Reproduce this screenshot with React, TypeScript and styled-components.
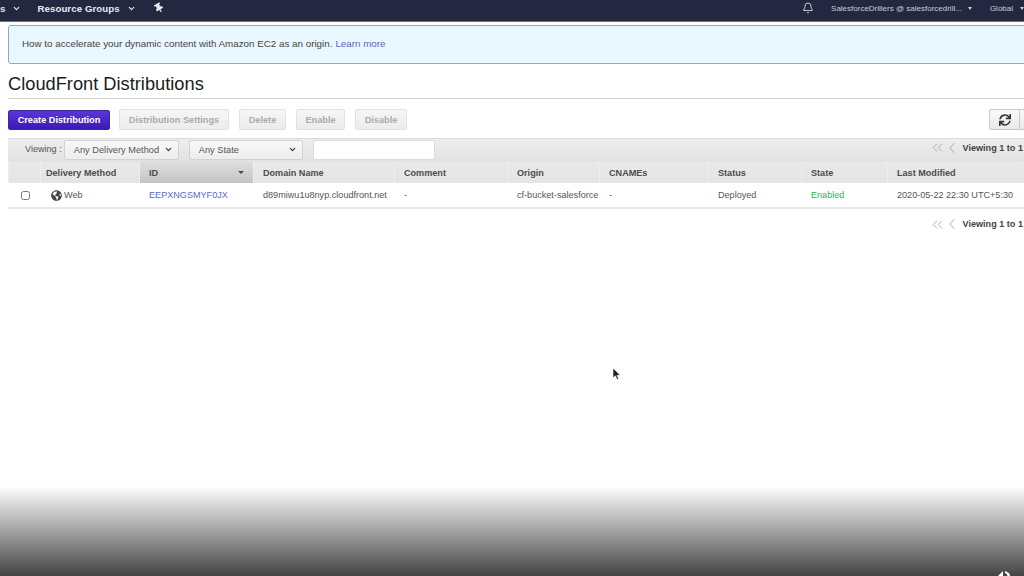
import styled, { createGlobalStyle } from "styled-components";
import { ChevronDown, ChevronLeft, ChevronsLeft, Bell } from "lucide-react";
import { FaSync, FaGlobeAmericas, FaThumbtack } from "react-icons/fa";

const GlobalStyle = createGlobalStyle`
  html, body { margin: 0; padding: 0; background: #fff; }
  body { font-family: "Liberation Sans", Arial, sans-serif; color: #444; }
`;

const Screen = styled.div`
  position: relative;
  width: 1024px;
  height: 576px;
  overflow: hidden;
  background: #fff;
`;

const Nav = styled.div`
  display: flex;
  align-items: center;
  box-sizing: border-box;
  height: 22px;
  padding-bottom: 5px;
  width: 1024px;
  background: #232840;
  border-bottom: 1px solid #6f7280;
  color: #e8e9ee;
`;

const NavLeft = styled.div`
  display: flex;
  align-items: center;
  font-size: 9.65px;
  font-weight: 700;
  letter-spacing: 0.1px;
`;

const NavItem = styled.span<{ $gap?: number; $before?: number }>`
  display: inline-flex;
  align-items: center;
  margin-left: ${(p) => p.$before ?? 0}px;
  margin-right: ${(p) => p.$gap ?? 0}px;
  svg { margin-left: 7px; }
`;

const NavRight = styled.div`
  display: flex;
  align-items: center;
  margin-left: auto;
  font-size: 8px;
  color: #c9ccd6;
`;

const Caret = styled.span<{ $size?: number; $offset?: number }>`
  display: inline-block;
  width: 0;
  height: 0;
  margin-left: ${(p) => p.$offset ?? 6}px;
  border-left: ${(p) => p.$size ?? 2.5}px solid transparent;
  border-right: ${(p) => p.$size ?? 2.5}px solid transparent;
  border-top: ${(p) => p.$size ?? 3}px solid currentColor;
`;

const Content = styled.div`
  width: 1060px;
  padding: 3px 0 0 8px;
`;

const Banner = styled.div`
  display: flex;
  align-items: center;
  box-sizing: border-box;
  height: 39px;
  padding: 0 0 2px 13px;
  background: #e9f7fe;
  border: 1px solid #9aa3cf;
  border-radius: 3px;
  font-size: 9.8px;
  color: #444;
`;

const TextLink = styled.a`
  color: #5a68c4;
  margin-left: 3px;
`;

const Title = styled.h1`
  margin: 8px 0 0;
  padding-bottom: 2px;
  height: 24px;
  line-height: 24px;
  font-size: 18.25px;
  font-weight: 400;
  color: #1c1c1c;
  border-bottom: 1px solid #d4d4d4;
`;

const Toolbar = styled.div`
  display: flex;
  align-items: center;
  margin-top: 10px;
  height: 21px;
`;

const Primary = styled.button`
  height: 20px;
  width: 102px;
  padding: 0;
  margin-right: 9px;
  background: linear-gradient(#5a36d8, #3d18b8);
  border: 1px solid #3a2aa0;
  border-radius: 2px;
  color: #fff;
  font: 700 9.2px "Liberation Sans", sans-serif;
`;

const Disabled = styled.button<{ $width: number }>`
  height: 21px;
  width: ${(p) => p.$width}px;
  padding: 0;
  margin-right: 10px;
  background: linear-gradient(#f6f6f6, #ececec);
  border: 1px solid #e2e2e2;
  border-radius: 2px;
  color: #ababab;
  font: 700 9.2px "Liberation Sans", sans-serif;
`;

const RefreshGroup = styled.div`
  display: flex;
  margin-left: auto;
  margin-right: 17px;
`;

const IconButton = styled.button`
  display: flex;
  align-items: center;
  justify-content: center;
  width: 31px;
  height: 21px;
  padding: 0;
  background: linear-gradient(#fafafa, #e8e8e8);
  border: 1px solid #c8c8c8;
  border-radius: 2px 0 0 2px;
  color: #333;
`;

const GroupEnd = styled(IconButton)`
  border-left: none;
  border-radius: 0;
`;

const FilterBar = styled.div`
  display: flex;
  align-items: center;
  margin-top: 8px;
  padding-bottom: 2px;
  height: 24px;
  background: linear-gradient(#ededed, #e2e2e2);
  border-top: 1px solid #dcdcdc;
  box-sizing: border-box;
  font-size: 9.1px;
`;

const ViewingLabel = styled.span`
  margin-left: 17px;
  margin-right: 2px;
  margin-top: -1px;
  color: #555;
`;

const Select = styled.div<{ $width: number }>`
  display: flex;
  align-items: center;
  justify-content: space-between;
  box-sizing: border-box;
  width: ${(p) => p.$width}px;
  height: 20px;
  margin-right: 10px;
  padding: 0 5px 0 9px;
  background: linear-gradient(#f8f8f8, #ededed);
  border: 1px solid #d2d2d2;
  border-radius: 2px;
  color: #555;
  font-size: 9.25px;
  white-space: nowrap;
  svg { color: #333; flex: none; }
`;

const SearchBox = styled.div`
  width: 122px;
  height: 20px;
  box-sizing: border-box;
  background: #fff;
  border: 1px solid #dcdcdc;
  border-radius: 2px;
`;

const Pager = styled.div<{ $lift?: number }>`
  display: flex;
  align-items: center;
  margin-left: auto;
  margin-right: 45px;
  margin-top: ${(p) => p.$lift ?? 0}px;
  font-size: 9.1px;
  font-weight: 700;
  color: #444;
  white-space: nowrap;
  svg { color: #a8a8a8; flex: none; }
  svg + svg { margin-left: -3px; }
  span { margin-left: 2px; }
`;

const columns = "32px 99px 114px 141px 113px 92px 109px 93px 86px 174px";

const HeadRow = styled.div`
  display: grid;
  grid-template-columns: ${columns};
  height: 21px;
  background: linear-gradient(#e9e9e9, #e4e4e4);
`;

const HeadCell = styled.div<{ $sorted?: boolean; $inset?: number }>`
  display: flex;
  align-items: center;
  justify-content: space-between;
  padding: 0 9px 0 ${(p) => p.$inset ?? 9}px;
  font-size: 9.1px;
  font-weight: 700;
  color: #4c4c4c;
  white-space: nowrap;
  border-left: 1px solid #eeeeee;
  background: ${(p) => (p.$sorted ? "linear-gradient(#dedede, #c4c4c4)" : "none")};
`;

const DataRow = styled.div`
  display: grid;
  grid-template-columns: ${columns};
  height: 24px;
  align-items: center;
  background: #fff;
  border-bottom: 2px solid #e8e8e8;
  font-size: 9.1px;
  color: #555;
`;

const DataCell = styled.div<{ $tone?: string }>`
  padding-left: 10px;
  white-space: nowrap;
  color: ${(p) => p.$tone ?? "#555"};
  display: flex;
  align-items: center;
  gap: 2px;
  svg { color: #444; margin-left: 1px; }
`;

const Check = styled.input.attrs({ type: "checkbox" })`
  display: block;
  width: 9px;
  height: 9px;
  margin: 0 0 0 13px;
`;

const FooterPager = styled.div`
  display: flex;
  justify-content: flex-end;
  margin-top: 8px;
  height: 14px;
`;

const PinIcon = styled(FaThumbtack)`
  margin-left: 0;
  transform: rotate(-30deg);
`;

const BottomFade = styled.div`
  position: absolute;
  left: 0;
  right: 0;
  bottom: 0;
  height: 90px;
  background: linear-gradient(rgba(68, 68, 68, 0), #444);
  pointer-events: none;
`;

const Cursor = styled.svg`
  position: absolute;
  left: 612px;
  top: 367px;
`;

const SpeakerGlyph = styled.svg`
  position: absolute;
  right: 14px;
  bottom: 0;
`;

const PagerBlock = ({ lift }: { lift?: number }) => (
  <Pager $lift={lift}>
    <ChevronsLeft size={17} strokeWidth={1.3} />
    <ChevronLeft size={18} strokeWidth={1.3} />
    <span>Viewing 1 to 1</span>
  </Pager>
);

const heads = ["Delivery Method", "ID", "Domain Name", "Comment", "Origin", "CNAMEs", "Status", "State", "Last Modified"];

export default function App() {
  return (
    <Screen>
      <GlobalStyle />
      <Nav>
        <NavLeft>
          <NavItem $gap={16}>
            s<ChevronDown size={9} strokeWidth={3} />
          </NavItem>
          <NavItem $gap={18}>
            Resource Groups<ChevronDown size={9} strokeWidth={3} />
          </NavItem>
          <PinIcon size={10} />
        </NavLeft>
        <NavRight>
          <Bell size={12} strokeWidth={1.5} color="#fff" />
          <NavItem $before={17} $gap={18}>
            SalesforceDrillers @ salesforcedrill...<Caret />
          </NavItem>
          <NavItem>
            Global<Caret $offset={7} />
          </NavItem>
        </NavRight>
      </Nav>
      <Content>
        <Banner>
          How to accelerate your dynamic content with Amazon EC2 as an origin.
          <TextLink>Learn more</TextLink>
        </Banner>
        <Title>CloudFront Distributions</Title>
        <Toolbar>
          <Primary>Create Distribution</Primary>
          <Disabled $width={110}>Distribution Settings</Disabled>
          <Disabled $width={47}>Delete</Disabled>
          <Disabled $width={49}>Enable</Disabled>
          <Disabled $width={52}>Disable</Disabled>
          <RefreshGroup>
            <IconButton>
              <FaSync size={12} />
            </IconButton>
            <GroupEnd />
          </RefreshGroup>
        </Toolbar>
        <FilterBar>
          <ViewingLabel>Viewing :</ViewingLabel>
          <Select $width={115}>
            Any Delivery Method
            <ChevronDown size={9} strokeWidth={3} />
          </Select>
          <Select $width={114}>
            Any State
            <ChevronDown size={9} strokeWidth={3} />
          </Select>
          <SearchBox />
          <PagerBlock lift={-4} />
        </FilterBar>
        <HeadRow>
          <HeadCell />
          {heads.map((h, i) => (
            <HeadCell key={h} $sorted={h === "ID"} $inset={i === 0 ? 5 : undefined}>
              {h}
              {h === "ID" && <Caret $size={3} />}
            </HeadCell>
          ))}
        </HeadRow>
        <DataRow>
          <div>
            <Check />
          </div>
          <DataCell>
            <FaGlobeAmericas size={11} />
            Web
          </DataCell>
          <DataCell $tone="#5a68c4">EEPXNGSMYF0JX</DataCell>
          <DataCell>d89miwu1u8nyp.cloudfront.net</DataCell>
          <DataCell>-</DataCell>
          <DataCell>cf-bucket-salesforce</DataCell>
          <DataCell>-</DataCell>
          <DataCell>Deployed</DataCell>
          <DataCell $tone="#1db954">Enabled</DataCell>
          <DataCell>2020-05-22 22:30 UTC+5:30</DataCell>
        </DataRow>
        <FooterPager>
          <PagerBlock />
        </FooterPager>
      </Content>
      <Cursor width="9" height="14" viewBox="0 0 9 14">
        <path d="M1 1v10l2.4-2.2L5 12.5l1.6-.7L5 8.3h3.2z" fill="#222" stroke="#fff" strokeWidth="0.6" />
      </Cursor>
      <BottomFade />
      <SpeakerGlyph width="12" height="5" viewBox="0 0 12 5">
        <path d="M0 5L5 0V5zM7 0Q12 1.5 12 5H9.5Q9.5 3 7 2z" fill="#fff" />
      </SpeakerGlyph>
    </Screen>
  );
}
